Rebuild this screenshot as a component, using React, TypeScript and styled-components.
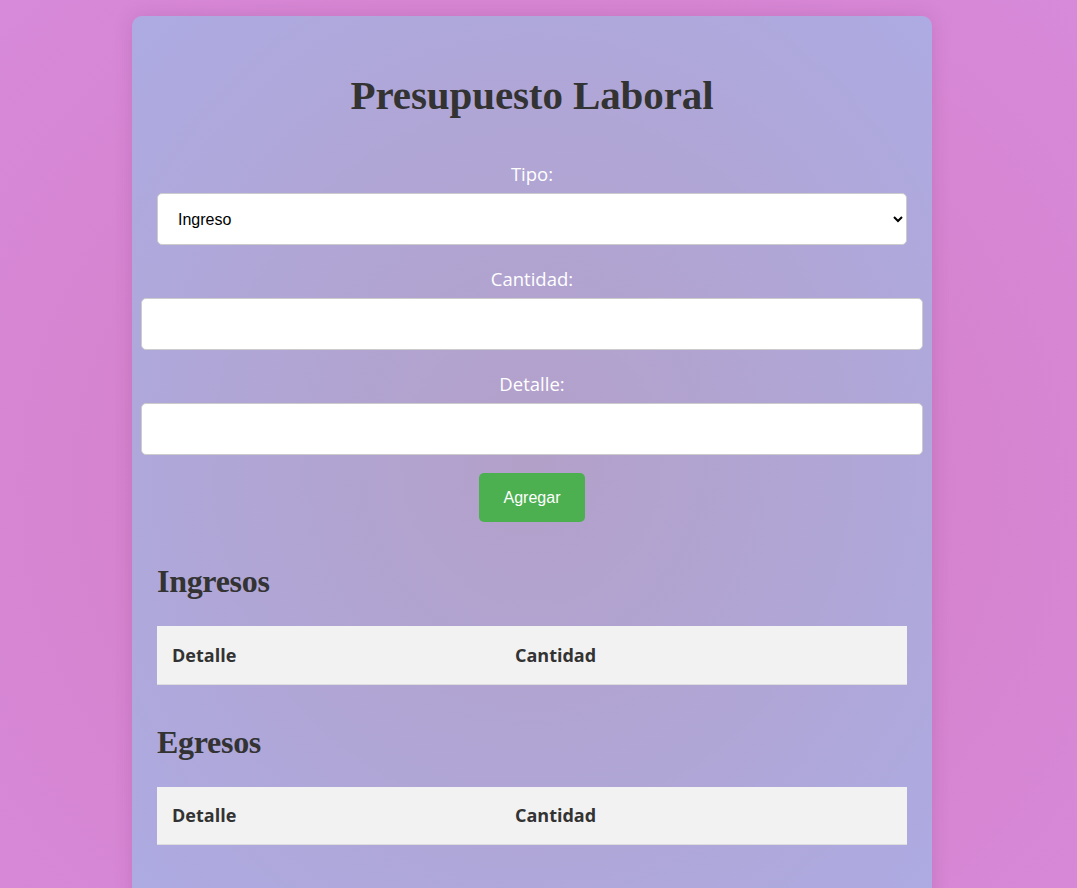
import React from "react";
import styled, { createGlobalStyle } from "styled-components";

const GlobalStyle = createGlobalStyle`
  html, body {
    margin: 0;
    padding: 0;
  }
  body {
    min-height: 100vh;
    padding-right: 13px;
    background: radial-gradient(ellipse at 50% 55%, #d47fc6 0%, #d582cc 45%, #d78ada 100%);
    background-attachment: fixed;
    font-family: "Open Sans", "Noto Sans", sans-serif;
    overflow: hidden;
  }
`;

const Card = styled.main`
  box-sizing: border-box;
  width: 800px;
  margin: 16px auto 0;
  padding: 25px 25px 60px;
  border-radius: 10px;
  background: radial-gradient(ellipse at 50% 50%, #b3a0c9 0%, #b0a6d6 55%, #adabe3 100%);
  box-shadow: 0 0 18px rgba(120, 40, 110, 0.18);
`;

const Title = styled.h1`
  margin: 31px 0 0;
  font-family: "Liberation Serif", "Times New Roman", serif;
  font-weight: 700;
  font-size: 41px;
  line-height: 47px;
  color: #333;
  text-align: center;
  letter-spacing: -0.1px;
`;

const Form = styled.form`
  display: flex;
  flex-direction: column;
  align-items: center;
  margin-top: 42px;
`;

const Label = styled.label<{ $first?: boolean }>`
  display: block;
  font-size: 18.5px;
  line-height: 26px;
  color: #ffffff;
  margin-top: ${(p) => (p.$first ? "0" : "21px")};
  margin-bottom: 6px;
`;

const Select = styled.select`
  box-sizing: border-box;
  width: 100%;
  height: 52px;
  padding: 0 11px 0 16px;
  border: 1px solid #ccc;
  border-radius: 5px;
  background: #fff;
  font-family: "Liberation Sans", Arial, sans-serif;
  font-size: 16px;
  color: #000;
`;

const Input = styled.input`
  box-sizing: content-box;
  width: 100%;
  height: 20px;
  padding: 15px;
  border: 1px solid #ccc;
  border-radius: 5px;
  background: #fff;
  font-family: "Liberation Sans", Arial, sans-serif;
  font-size: 16px;
  flex-shrink: 0;
`;

const Button = styled.button`
  margin-top: 18px;
  height: 49px;
  padding: 0 25px;
  border: none;
  border-radius: 5px;
  background: #4caf50;
  color: #fff;
  font-family: "Liberation Sans", Arial, sans-serif;
  font-size: 16px;
  cursor: pointer;
`;

const SectionTitle = styled.h2<{ $top: number }>`
  margin: ${(p) => p.$top}px 0 0;
  font-family: "Liberation Serif", "Times New Roman", serif;
  font-weight: 700;
  font-size: 32px;
  line-height: 38px;
  color: #333;
  letter-spacing: -0.3px;
`;

const Table = styled.table`
  width: 100%;
  margin-top: 26px;
  border-collapse: collapse;
`;

const HeadCell = styled.th<{ $w: string }>`
  box-sizing: border-box;
  width: ${(p) => p.$w};
  height: 58px;
  padding: 0 15px;
  text-align: left;
  background: #f2f2f2;
  border-bottom: 1px solid #ddd;
  font-size: 18px;
  font-weight: 700;
  color: #333;
`;

function BudgetTable() {
  return (
    <Table>
      <thead>
        <tr>
          <HeadCell $w="343px">Detalle</HeadCell>
          <HeadCell $w="407px">Cantidad</HeadCell>
        </tr>
      </thead>
      <tbody></tbody>
    </Table>
  );
}

export default function App() {
  return (
    <>
      <GlobalStyle />
      <Card>
        <Title>Presupuesto Laboral</Title>
        <Form onSubmit={(e) => e.preventDefault()}>
          <Label $first htmlFor="tipo">Tipo:</Label>
          <Select id="tipo" defaultValue="ingreso">
            <option value="ingreso">Ingreso</option>
            <option value="egreso">Egreso</option>
          </Select>
          <Label htmlFor="cantidad">Cantidad:</Label>
          <Input id="cantidad" type="number" />
          <Label htmlFor="detalle">Detalle:</Label>
          <Input id="detalle" type="text" />
          <Button type="submit">Agregar</Button>
        </Form>
        <SectionTitle $top={40}>Ingresos</SectionTitle>
        <BudgetTable />
        <SectionTitle $top={38}>Egresos</SectionTitle>
        <BudgetTable />
      </Card>
    </>
  );
}
